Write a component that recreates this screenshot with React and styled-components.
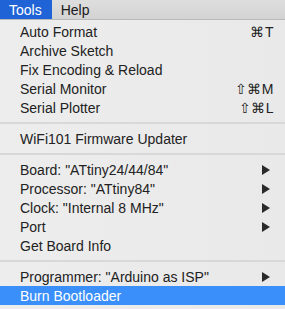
import React from 'react';
import styled, { createGlobalStyle } from 'styled-components';

const GlobalStyle = createGlobalStyle`
  html, body {
    margin: 0;
    padding: 0;
    background: #ececec;
  }
  body {
    font-family: "Liberation Sans", Arial, Helvetica, sans-serif;
    -webkit-font-smoothing: antialiased;
  }
`;

const Screen = styled.div`
  width: 285px;
  height: 309px;
  overflow: hidden;
  background: #ececec;
`;

const MenuBar = styled.div`
  display: flex;
  height: 19px;
  background: linear-gradient(#dedede, #d3d3d3);
  border-bottom: 1px solid #b9b9b9;
`;

const BarItem = styled.div`
  display: flex;
  align-items: center;
  padding: 0 10px 0 9px;
  font-size: 14px;
  color: ${p => (p.$active ? '#fff' : '#1a1a1a')};
  background: ${p => (p.$active ? '#1f63d6' : 'transparent')};
`;

const Menu = styled.div`
  display: flex;
  flex-direction: column;
  padding: 2px 0 4px;
  background: linear-gradient(90deg, #ededed, #e9e9e9);
`;

const Row = styled.div`
  display: flex;
  align-items: center;
  justify-content: space-between;
  height: 19px;
  padding: 0 ${p => (p.$arrow ? 15 : 11)}px 0 20px;
  font-size: 14px;
  color: ${p => (p.$active ? '#fff' : '#222')};
  background: ${p => (p.$active ? '#3a8ffb' : 'transparent')};
  white-space: nowrap;
`;

const Shortcut = styled.span`
  font-size: 14px;
  color: #222;
  letter-spacing: 0.5px;
`;

const Arrow = styled.span`
  width: 0;
  height: 0;
  border-top: 5px solid transparent;
  border-bottom: 5px solid transparent;
  border-left: 8px solid #2a2a2a;
`;

const Separator = styled.div`
  height: 2px;
  margin: 5px 0 5px;
  background: #d8d8d8;
`;

const groups = [
  [
    { label: 'Auto Format', key: '⌘T' },
    { label: 'Archive Sketch' },
    { label: 'Fix Encoding & Reload' },
    { label: 'Serial Monitor', key: '⇧⌘M' },
    { label: 'Serial Plotter', key: '⇧⌘L' },
  ],
  [{ label: 'WiFi101 Firmware Updater' }],
  [
    { label: 'Board: "ATtiny24/44/84"', arrow: true },
    { label: 'Processor: "ATtiny84"', arrow: true },
    { label: 'Clock: "Internal 8 MHz"', arrow: true },
    { label: 'Port', arrow: true },
    { label: 'Get Board Info' },
  ],
  [
    { label: 'Programmer: "Arduino as ISP"', arrow: true },
    { label: 'Burn Bootloader', active: true },
  ],
];

export default function App() {
  return (
    <>
      <GlobalStyle />
      <Screen>
        <MenuBar>
          <BarItem $active>Tools</BarItem>
          <BarItem>Help</BarItem>
        </MenuBar>
        <Menu>
          {groups.map((items, gi) => (
            <React.Fragment key={gi}>
              {gi > 0 && <Separator />}
              {items.map(item => (
                <Row key={item.label} $arrow={item.arrow} $active={item.active}>
                  <span>{item.label}</span>
                  {item.key && <Shortcut>{item.key}</Shortcut>}
                  {item.arrow && <Arrow />}
                </Row>
              ))}
            </React.Fragment>
          ))}
        </Menu>
      </Screen>
    </>
  );
}
